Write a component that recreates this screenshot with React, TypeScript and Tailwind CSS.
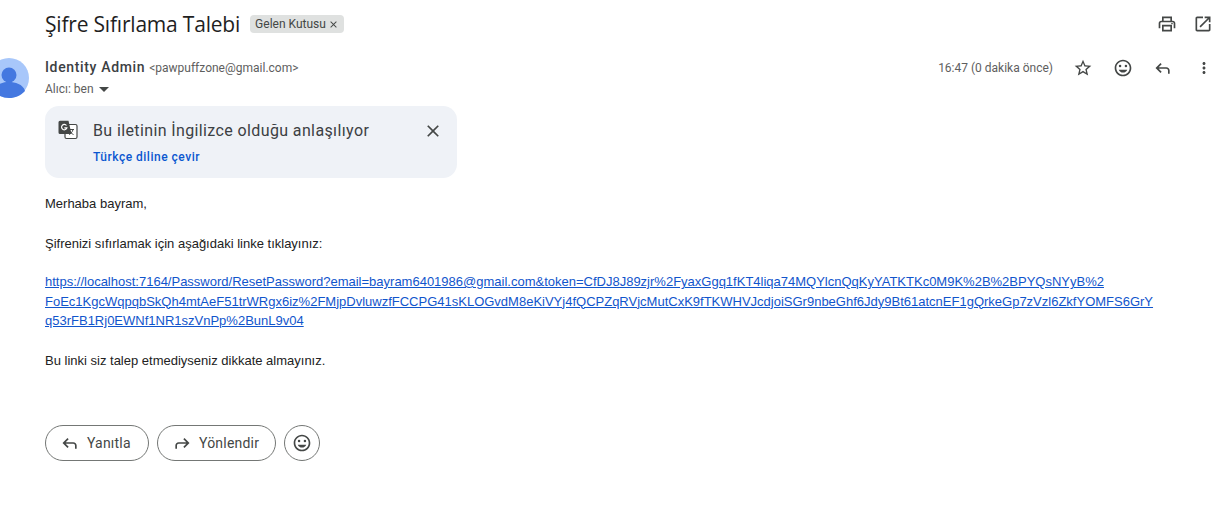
import React from 'react';

const urlLines = [
  'https://localhost:7164/Password/ResetPassword?email=bayram6401986@gmail.com&token=CfDJ8J89zjr%2FyaxGgq1fKT4liqa74MQYlcnQqKyYATKTKc0M9K%2B%2BPYQsNYyB%2',
  'FoEc1KgcWqpqbSkQh4mtAeF51trWRgx6iz%2FMjpDvluwzfFCCPG41sKLOGvdM8eKiVYj4fQCPZqRVjcMutCxK9fTKWHVJcdjoiSGr9nbeGhf6Jdy9Bt61atcnEF1gQrkeGp7zVzl6ZkfYOMFS6GrY',
  'q53rFB1Rj0EWNf1NR1szVnPp%2BunL9v04',
];

// material outline icons, same ones gmail uses
const Icon = ({ size, flip, children }: { size: number; flip?: boolean; children: React.ReactNode }) => (
  <svg viewBox="0 0 24 24" width={size} height={size} fill="currentColor" className={flip ? 'shrink-0 -scale-x-100' : 'shrink-0'}>
    {children}
  </svg>
);

const PrintIcon = () => (
  <Icon size={20}>
    <path d="M19 8h-1V3H6v5H5c-1.66 0-3 1.34-3 3v6h4v4h12v-4h4v-6c0-1.66-1.34-3-3-3zM8 5h8v3H8V5zm8 14H8v-4h8v4zm2-2v-4H6v4H4v-6c0-.55.45-1 1-1h14c.55 0 1 .45 1 1v6h-2z" />
    <circle cx="18" cy="11.500" r="1" />
  </Icon>
);

const OpenIcon = () => (
  <Icon size={20}>
    <path d="M19 19H5V5h7V3H5c-1.11 0-2 .9-2 2v14c0 1.100.89 2 2 2h14c1.100 0 2-.9 2-2v-7h-2v7zM14 3v2h3.590l-9.830 9.830 1.410 1.410L19 6.410V10h2V3h-7z" />
  </Icon>
);

const StarIcon = () => (
  <Icon size={20}>
    <path d="M22 9.240l-7.190-.62L12 2 9.190 8.630 2 9.240l5.460 4.730L5.820 21 12 17.270 18.180 21l-1.630-7.030L22 9.240zM12 15.400l-3.760 2.270 1-4.280-3.320-2.880 4.380-.38L12 6.100l1.710 4.040 4.380.38-3.320 2.880 1 4.280L12 15.400z" />
  </Icon>
);

const MoodIcon = () => (
  <Icon size={20}>
    <path d="M11.990 2C6.470 2 2 6.480 2 12s4.470 10 9.990 10C17.520 22 22 17.520 22 12S17.520 2 11.990 2zM12 20c-4.420 0-8-3.580-8-8s3.580-8 8-8 8 3.580 8 8-3.580 8-8 8z" />
    <circle cx="15.500" cy="9.500" r="1.500" />
    <circle cx="8.500" cy="9.500" r="1.500" />
    <path d="M12 17.500c2.330 0 4.300-1.460 5.110-3.500H6.890c.8 2.040 2.780 3.500 5.110 3.500z" />
  </Icon>
);

const ReplyIcon = ({ flip }: { flip?: boolean }) => (
  <Icon size={20} flip={flip}>
    <path d="M20 19v-4c0-2.200-1.800-4-4-4H6.830l3.580-3.590L9 6l-6 6 6 6 1.410-1.410L6.830 13H16c1.100 0 2 .9 2 2v4z" />
  </Icon>
);

const MoreIcon = () => (
  <Icon size={18}>
    <path d="M12 8c1.100 0 2-.9 2-2s-.9-2-2-2-2 .9-2 2 .9 2 2 2zm0 2c-1.100 0-2 .9-2 2s.9 2 2 2 2-.9 2-2-.9-2-2-2zm0 6c-1.100 0-2 .9-2 2s.9 2 2 2 2-.9 2-2-.9-2-2-2z" />
  </Icon>
);

const CloseIcon = ({ size }: { size: number }) => (
  <Icon size={size}>
    <path d="M19 6.410L17.590 5 12 10.590 6.410 5 5 6.410 10.590 12 5 17.590 6.410 19 12 13.410 17.590 19 19 17.590 13.410 12z" />
  </Icon>
);

const Avatar = () => (
  <svg viewBox="0 0 40 40" className="w-10 h-10 shrink-0 -ml-[11px] mt-[10px]">
    <circle cx="20" cy="20" r="20" fill="#a8c7fa" />
    <circle cx="20" cy="17" r="7.500" fill="#4478e0" />
    <path d="M4 33c2-7 10-9 16-9s14 2 16 9c-4 4.500-10 7-16 7S8 37.500 4 33z" fill="#4478e0" />
  </svg>
);

const TranslateIcon = () => (
  <svg viewBox="0 0 20 20" className="w-5 h-5 shrink-0">
    <rect x="7" y="4.500" width="12" height="14" rx="1.500" fill="#fff" stroke="#444746" strokeWidth="1.200" />
    <path d="M10.500 9.500h5.500M15 9.500c-.5 2.500-2.500 4.500-4 5M11.500 10.500c.8 1.800 2.300 3.300 4 4" fill="none" stroke="#444746" strokeWidth="1" />
    <path d="M2 .8h8.500l3 13.200H2a1.500 1.500 0 0 1-1.500-1.500V2.300A1.500 1.500 0 0 1 2 .8z" fill="#444746" />
    <path d="M8.500 5.500a2.700 2.700 0 1 0 .4 2.300H6.300" fill="none" stroke="#fff" strokeWidth="1.200" />
  </svg>
);

const ActionButton = ({ icon, label, width }: { icon: React.ReactNode; label: string; width: string }) => (
  <button className={`flex items-center h-9 border border-[#747775] rounded-full pl-[14px] text-[#444746] ${width}`}>
    {icon}
    <span className="ml-[7px] text-[14px] tracking-[0.2px]">{label}</span>
  </button>
);

export default function App() {
  return (
    <div className="w-[1222px] h-[519px] bg-white overflow-hidden font-['Roboto',sans-serif]">
      {/* Subject row */}
      <div className="flex items-center h-[48px] pl-[45px] pr-[9px]">
        <h1 className="font-['Open_Sans',sans-serif] text-[21px] leading-[28px] text-[#1f1f1f] tracking-[-0.2px] -mt-[1px]">Şifre Sıfırlama Talebi</h1>
        <span className="flex items-center ml-[10px] h-[18px] px-[5px] rounded-[4px] bg-[#dfe1e0] text-[12px] text-[#444746]">
          Gelen Kutusu
          <span className="ml-[2px]"><CloseIcon size={11} /></span>
        </span>
        <div className="ml-auto flex items-center gap-[16px] text-[#444746]">
          <PrintIcon />
          <OpenIcon />
        </div>
      </div>

      {/* Sender row */}
      <div className="flex items-start h-[50px] pr-[9px]">
        <Avatar />
        <div className="ml-[16px] mt-[9px]">
          <div className="flex items-baseline leading-[20px]">
            <span className="text-[14px] font-medium tracking-[0.65px] text-[#3c4043]">Identity Admin</span>
            <span className="ml-[4px] text-[12px] text-[#5e5e5e]">&lt;pawpuffzone@gmail.com&gt;</span>
          </div>
          <div className="flex items-center mt-[2px] text-[12px] leading-[18px] text-[#5e5e5e]">
            Alıcı: ben
            <span className="ml-[5px] mt-[1px] w-0 h-0 border-x-[5px] border-x-transparent border-t-[5px] border-t-[#444746]" />
          </div>
        </div>
        <div className="ml-auto flex items-center h-[24px] mt-[8px] text-[#444746]">
          <span className="text-[12px] text-[#5e5e5e] mr-[20px]">16:47 (0 dakika önce)</span>
          <StarIcon />
          <span className="ml-[20px]"><MoodIcon /></span>
          <span className="ml-[20px]"><ReplyIcon /></span>
          <span className="ml-[22px]"><MoreIcon /></span>
        </div>
      </div>

      {/* Translate banner */}
      <div className="ml-[45px] mt-[8px] w-[412px] h-[72px] rounded-[14px] bg-[#eff2f7] flex items-start pl-[13px] pr-[14px] pt-[14px]">
        <TranslateIcon />
        <div className="ml-[15px] flex-1">
          <div className="text-[16px] leading-[22px] text-[#3c4043] tracking-[0.38px]">Bu iletinin İngilizce olduğu anlaşılıyor</div>
          <div className="mt-[6px] text-[12px] leading-[18px] font-medium text-[#0b57d0] tracking-[0.5px]">Türkçe diline çevir</div>
        </div>
        <span className="text-[#444746] mt-[1px]"><CloseIcon size={20} /></span>
      </div>

      {/* Message body */}
      <div className="ml-[45px] mt-[16px] font-['Liberation_Sans',sans-serif] text-[13px] leading-[19.500px] text-[#222222]">
        <p>Merhaba bayram,</p>
        <p className="mt-[20px]">Şifrenizi sıfırlamak için aşağıdaki linke tıklayınız:</p>
        <p className="mt-[19px]">
          {urlLines.map((line) => (
            <a key={line} href="#" className="block w-fit whitespace-nowrap text-[#1155cc] underline">{line}</a>
          ))}
        </p>
        <p className="mt-[20px]">Bu linki siz talep etmediyseniz dikkate almayınız.</p>
      </div>

      {/* Reply buttons */}
      <div className="flex items-center gap-[8px] ml-[45px] mt-[55px]">
        <ActionButton icon={<ReplyIcon />} label="Yanıtla" width="w-[104px]" />
        <ActionButton icon={<ReplyIcon flip />} label="Yönlendir" width="w-[119px]" />
        <button className="w-9 h-9 rounded-full border border-[#747775] flex items-center justify-center text-[#444746]">
          <MoodIcon />
        </button>
      </div>
    </div>
  );
}
